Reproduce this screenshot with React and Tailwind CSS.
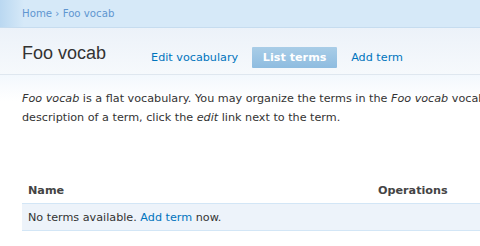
const font = { fontFamily: "'DejaVu Sans', Verdana, sans-serif" };

const Tab = ({ label, active }) =>
  active ? (
    <span className="w-[85px] rounded-[1px] bg-[linear-gradient(#a9cde7,#8ebce0)] text-center text-[11.2px] font-bold leading-[21px] text-white">
      {label}
    </span>
  ) : (
    <a className="text-[11.2px] leading-[21px] text-[#0074bd]">{label}</a>
  );

export default function App() {
  return (
    <div className="h-[246px] w-[480px] overflow-hidden bg-white text-[#333]" style={font}>
      <div className="flex h-[28px] items-center border-b border-[#c6dcef] bg-[linear-gradient(to_right,#bad8f1,#d6e9f8_24px)] px-[22px] text-[10.2px] text-[#5f96d0]">
        Home › Foo vocab
      </div>

      <div className="flex h-[47px] items-center whitespace-nowrap border-b border-[#dfe7ef] bg-[linear-gradient(#ecf2f9,#f6f9fc)] px-[22px] pt-[12px]">
        <h1 className="mb-[7px] mr-[45px] font-['Liberation_Sans',Arial,sans-serif] text-[18px] font-normal text-[#333]">
          Foo vocab
        </h1>
        <div className="flex items-center gap-[14px]">
          <Tab label="Edit vocabulary" />
          <Tab label="List terms" active />
          <Tab label="Add term" />
        </div>
      </div>

      <div className="bg-[linear-gradient(#f3f8fd,#ffffff_26px)] px-[22px] pt-[14px]">
        <p className="whitespace-nowrap text-[11.2px] leading-[19px]">
          <em>Foo vocab</em> is a flat vocabulary. You may organize the terms in the <em>Foo vocab</em> vocabulary by using the handles on the left side of the table.
          <br />
          description of a term, click the <em>edit</em> link next to the term.
        </p>
      </div>

      <table className="ml-[22px] mt-[56px] w-[560px] border-collapse text-[11.2px]">
        <thead>
          <tr>
            <th className="px-[6px] pb-[5px] text-left font-bold leading-[15px] text-[#444]">Name</th>
            <th className="w-[210px] px-[6px] pb-[5px] text-left font-bold leading-[15px] text-[#444]">Operations</th>
          </tr>
        </thead>
        <tbody>
          <tr className="border-y border-[#d3e6f6] bg-[#edf3fa]">
            <td colSpan={2} className="h-[27px] px-[6px] leading-[15px]">
              No terms available. <a className="text-[#0074bd]">Add term</a> now.
            </td>
          </tr>
        </tbody>
      </table>
    </div>
  );
}
